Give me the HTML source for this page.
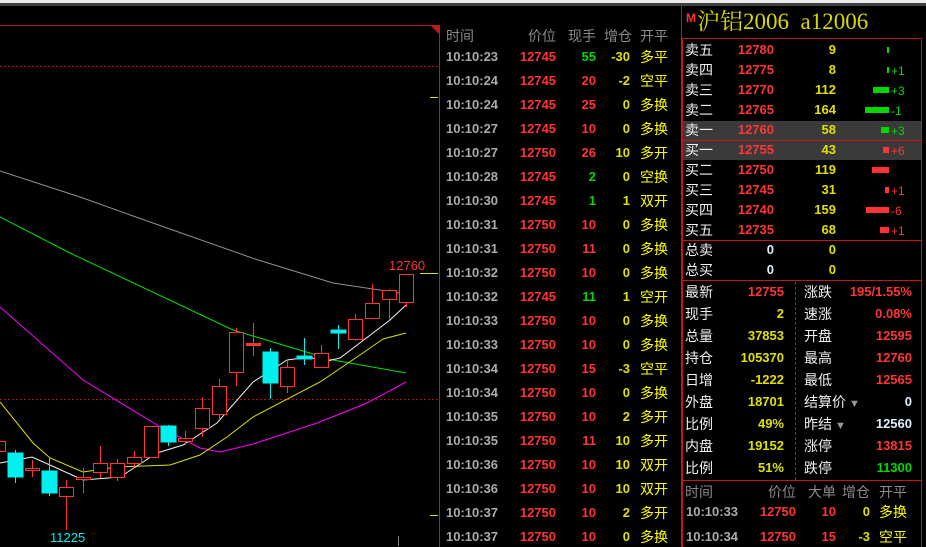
<!DOCTYPE html>
<html><head><meta charset="utf-8"><style>
*{margin:0;padding:0;box-sizing:border-box}
body{width:926px;height:547px;background:#000;overflow:hidden;position:relative;font-family:"Liberation Sans","Noto Sans CJK SC",sans-serif}
.a{position:absolute;white-space:nowrap;line-height:16px;height:16px}
.n{font-weight:bold;font-size:13px}
.c{font-size:14px}
.r{text-align:right}
.gy{color:#a8acb0}.rd{color:#ff3434}.gn{color:#00d800}.yl{color:#e0e000}.ye{color:#ffff00}.wh{color:#f0f0f0}.hd{color:#8a8a8a}.bl{color:#dfefff}
</style></head><body>
<div style="position:absolute;left:0;top:0;width:926px;height:3px;background:#eaeaea"></div>
<div style="position:absolute;left:0;top:3px;width:926px;height:3px;background:#404040"></div>

<svg width="440" height="547" style="position:absolute;left:0;top:0" xmlns="http://www.w3.org/2000/svg">
<line x1="0" y1="25.5" x2="440" y2="25.5" stroke="#c01818"/>
<line x1="439.5" y1="25" x2="439.5" y2="547" stroke="#c01818"/>
<polygon points="430,25 440,25 440,35" fill="#c01818"/>
<line x1="0" y1="66.5" x2="438" y2="66.5" stroke="#b01010" stroke-dasharray="2,2"/>
<line x1="0" y1="399.5" x2="438" y2="399.5" stroke="#b01010" stroke-dasharray="2,2"/>
<line x1="430" y1="97.5" x2="438" y2="97.5" stroke="#e0e000"/>
<line x1="420" y1="273.5" x2="438" y2="273.5" stroke="#e0e000"/>
<line x1="430" y1="515.5" x2="438" y2="515.5" stroke="#e0e000"/>
<line x1="398.5" y1="536" x2="398.5" y2="546" stroke="#888"/>
<g fill="none" stroke-width="1">
<polyline stroke="#909090" points="0,171 80,197 150,222 255,259 333,283 406,294"/>
<polyline stroke="#00e000" points="0,217 70,253 233,330 333,360 406,373"/>
<polyline stroke="#ff00ff" points="0,307 83,380 157,425 200,448 220,452 253,444 317,423 367,403 406,382"/>
<polyline stroke="#e0e000" points="0,402 33,443 50,458 83,472 117,467 170,465 200,455 227,437 253,417 320,382 357,357 383,339 406,333"/>
<polyline stroke="#f0f0f0" points="0,463 32,457 50,465 83,480 120,477 157,453 183,445 217,423 253,382 287,360 310,357 323,362 340,358 390,320 406,305"/>
</g>
<g stroke="#ff3434" fill="#000">
<rect x="-3.5" y="441.5" width="9" height="10"/>
<line x1="32.5" y1="460" x2="32.5" y2="477"/><rect x="25.5" y="468.5" width="14" height="2"/>
<line x1="66.5" y1="480" x2="66.5" y2="530"/><rect x="59.5" y="487.5" width="14" height="9"/>
<line x1="83.5" y1="468" x2="83.5" y2="493"/><rect x="76.5" y="477.5" width="14" height="2"/>
<line x1="100.5" y1="446" x2="100.5" y2="478"/><rect x="93.5" y="463.5" width="14" height="9"/>
<line x1="117.5" y1="459" x2="117.5" y2="481"/><rect x="110.5" y="463.5" width="14" height="14"/>
<line x1="134.5" y1="451" x2="134.5" y2="467"/><rect x="127.5" y="457.5" width="14" height="6"/>
<rect x="144.5" y="426.5" width="14" height="31"/>
<line x1="185.5" y1="431" x2="185.5" y2="445"/><rect x="178.5" y="438.5" width="14" height="3"/>
<line x1="202.5" y1="397" x2="202.5" y2="437"/><rect x="195.5" y="408.5" width="14" height="20"/>
<line x1="219.5" y1="379" x2="219.5" y2="420"/><rect x="212.5" y="386.5" width="14" height="28"/>
<line x1="236.5" y1="328" x2="236.5" y2="386"/><rect x="229.5" y="332.5" width="14" height="40"/>
<line x1="253.5" y1="323" x2="253.5" y2="356"/><rect x="246.5" y="343.5" width="14" height="2" fill="#ff3434"/>
<line x1="287.5" y1="359" x2="287.5" y2="393"/><rect x="280.5" y="367.5" width="14" height="19"/>
<line x1="321.5" y1="345" x2="321.5" y2="367"/><rect x="314.5" y="353.5" width="14" height="14"/>
<line x1="355.5" y1="314" x2="355.5" y2="341"/><rect x="348.5" y="319.5" width="14" height="20"/>
<line x1="372.5" y1="284" x2="372.5" y2="318"/><rect x="365.5" y="303.5" width="14" height="15"/>
<line x1="389.5" y1="289" x2="389.5" y2="320"/><rect x="382.5" y="290.5" width="14" height="9"/>
<line x1="406.5" y1="274" x2="406.5" y2="307"/><rect x="399.5" y="274.5" width="14" height="28"/>
</g>
<g stroke="#00f0f0" fill="#00f0f0">
<line x1="15.5" y1="450" x2="15.5" y2="483"/><rect x="8" y="453" width="15" height="24"/>
<line x1="49.5" y1="457" x2="49.5" y2="496"/><rect x="42" y="471" width="15" height="22"/>
<line x1="168.5" y1="425" x2="168.5" y2="446"/><rect x="161" y="426" width="15" height="16"/>
<line x1="270.5" y1="348" x2="270.5" y2="399"/><rect x="263" y="352" width="15" height="31"/>
<line x1="304.5" y1="338" x2="304.5" y2="365"/><rect x="297" y="356" width="15" height="3"/>
<line x1="338.5" y1="325" x2="338.5" y2="349"/><rect x="331" y="330" width="15" height="3"/>
</g>
<text x="389" y="270" fill="#ff3434" font-family="Liberation Sans" font-size="13">12760</text>
<text x="50" y="542" fill="#00f0f0" font-family="Liberation Sans" font-size="13">11225</text>
</svg>

<div id="tl"></div>

<div style="position:absolute;left:681px;top:6px;width:1px;height:541px;background:#c01818"></div>
<div style="position:absolute;left:686px;top:10px;font-size:12px;font-weight:bold;color:#ff3434" class="a">M</div>
<div style="position:absolute;left:697px;top:8px;font-size:23px;color:#d8d800;line-height:28px;font-family:'Liberation Serif','Noto Serif CJK SC',serif;white-space:nowrap">沪铝2006&nbsp; a12006</div>
<div style="position:absolute;left:682px;top:38px;width:240px;height:509px;border:1px solid #c01818;border-bottom:none"></div>
<div style="position:absolute;left:683px;top:121px;width:238px;height:39px;background:#3a3a3a"></div>
<div style="position:absolute;left:682px;top:140px;width:240px;height:1px;background:#c01818"></div>
<div style="position:absolute;left:682px;top:240px;width:240px;height:1px;background:#c01818"></div>
<div style="position:absolute;left:682px;top:280px;width:240px;height:1px;background:#c01818"></div>
<div style="position:absolute;left:682px;top:480px;width:240px;height:1px;background:#c01818"></div>
<div style="position:absolute;left:795px;top:282px;width:0;height:198px;border-left:1px dashed #c01818"></div>
<div id="ob"></div>

<script>
var h='';
function t(x,y,cls,txt,right){h+='<div class="a '+cls+(right?' r':'')+'" style="'+(right?'right:'+(926-x)+'px':'left:'+x+'px')+';top:'+(y-8)+'px">'+txt+'</div>';}
t(446,36,'c hd','时间');t(556,36,'c hd','价位',1);t(596,36,'c hd','现手',1);t(632,36,'c hd','增仓',1);t(640,36,'c hd','开平');
var R=[['23','12745','55g','-30','多平'],['24','12745','20','-2','空平'],['24','12745','25','0','多换'],['27','12745','10','0','多换'],['27','12750','26','10','多开'],['28','12745','2g','0','空换'],['30','12745','1g','1','双开'],['31','12750','10','0','多换'],['31','12750','11','0','多换'],['32','12750','10','0','多换'],['32','12745','11g','1','空开'],['33','12750','10','0','多换'],['33','12750','10','0','多换'],['34','12750','15','-3','空平'],['34','12750','10','0','多换'],['35','12750','10','2','多开'],['35','12750','11','10','多开'],['36','12750','10','10','双开'],['36','12750','10','10','双开'],['37','12750','10','2','多开'],['37','12750','10','0','多换']];
R.forEach(function(r,i){var y=57+24*i;var g=r[2].indexOf('g')>=0;t(446,y,'n gy','10:10:'+r[0]);t(556,y,'n rd',r[1],1);t(596,y,'n '+(g?'gn':'rd'),r[2].replace('g',''),1);t(630,y,'n yl',r[3],1);t(640,y,'c ye',r[4]);});
var B=[['卖五','12780','9',2,'','gn'],['卖四','12775','8',2,'+1','gn'],['卖三','12770','112',16,'+3','gn'],['卖二','12765','164',24,'-1','gn'],['卖一','12760','58',8,'+3','gn'],['买一','12755','43',6,'+6','rd'],['买二','12750','119',17,'','rd'],['买三','12745','31',4,'+1','rd'],['买四','12740','159',23,'-6','rd'],['买五','12735','68',9,'+1','rd']];
B.forEach(function(b,i){var y=50+20*i;t(685,y,'c wh',b[0]);t(774,y,'n rd',b[1],1);t(836,y,'n yl',b[2],1);var w=b[3];h+='<div style="position:absolute;left:'+(889-w)+'px;top:'+(y-3)+'px;width:'+w+'px;height:6px;background:'+(b[5]=='gn'?'#00d800':'#ff3434')+'"></div>';if(b[4])t(891,y,'c '+b[5],'<span style="font-size:12px">'+b[4]+'</span>');});
t(685,250,'c wh','总卖');t(774,250,'n bl','0',1);t(836,250,'n yl','0',1);
t(685,270,'c wh','总买');t(774,270,'n bl','0',1);t(836,270,'n yl','0',1);
var L=[['最新','12755','rd','涨跌','195/1.55%','rd'],['现手','2','yl','速涨','0.08%','rd'],['总量','37853','yl','开盘','12595','rd'],['持仓','105370','yl','最高','12760','rd'],['日增','-1222','yl','最低','12565','rd'],['外盘','18701','yl','结算价<span style="color:#999;font-size:11px"> ▼</span>','0','bl'],['比例','49%','yl','昨结<span style="color:#999;font-size:11px"> ▼</span>','12560','bl'],['内盘','19152','yl','涨停','13815','rd'],['比例','51%','yl','跌停','11300','gn']];
L.forEach(function(l,i){var y=292+22*i;t(685,y,'c wh',l[0]);t(784,y,'n '+l[2],l[1],1);t(804,y,'c wh',l[3]);t(912,y,'n '+l[5],l[4],1);});
t(685,492,'c hd','时间');t(796,492,'c hd','价位',1);t(836,492,'c hd','大单',1);t(870,492,'c hd','增仓',1);t(879,492,'c hd','开平');
t(686,512,'n gy','10:10:33');t(796,512,'n rd','12750',1);t(836,512,'n rd','10',1);t(870,512,'n yl','0',1);t(879,512,'c ye','多换');
t(686,537,'n gy','10:10:34');t(796,537,'n rd','12750',1);t(836,537,'n rd','15',1);t(870,537,'n yl','-3',1);t(879,537,'c ye','空平');
document.getElementById('ob').innerHTML=h;
</script>
</body></html>
